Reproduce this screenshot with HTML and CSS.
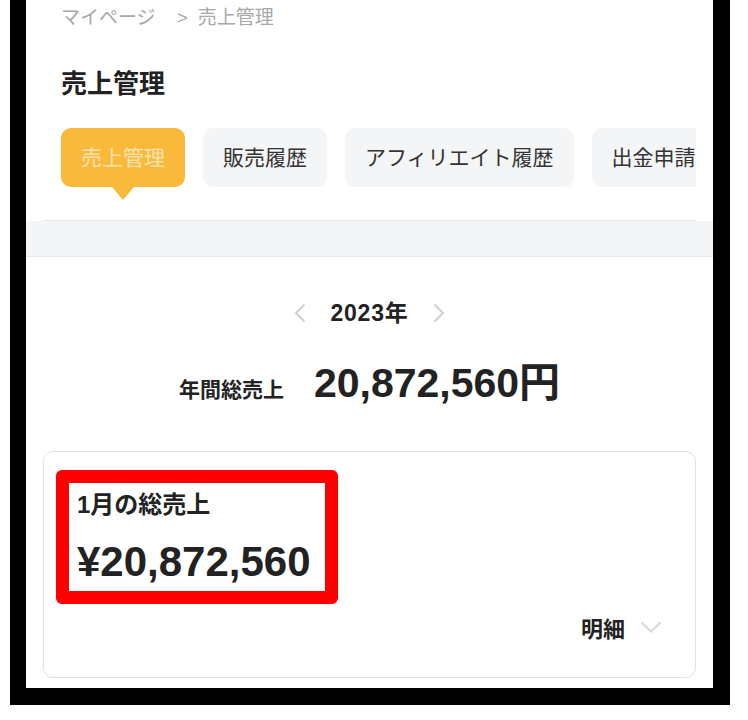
FILE: index.html
```html
<!DOCTYPE html>
<html lang="ja">
<head>
<meta charset="utf-8">
<title>売上管理</title>
<link rel="stylesheet" href="styles.css">
</head>
<body>
<div class="frame">
  <div class="screen">
    <header class="head">
      <nav class="crumb"><span>マイページ</span><span class="sep">&gt;</span><span>売上管理</span></nav>
      <h1 class="title">売上管理</h1>
      <div class="tabs">
        <div class="tab active">売上管理</div>
        <div class="tab">販売履歴</div>
        <div class="tab">アフィリエイト履歴</div>
        <div class="tab">出金申請</div>
      </div>
    </header>
    <div class="band"></div>
    <section class="summary">
      <div class="year">
        <svg class="chev" width="12" height="20" viewBox="0 0 12 20"><path d="M10.5 1.5 L2 10 L10.5 18.5" fill="none" stroke="#d0d0d0" stroke-width="2"/></svg>
        <span class="year-text">2023年</span>
        <svg class="chev" width="12" height="20" viewBox="0 0 12 20"><path d="M1.5 1.5 L10 10 L1.5 18.5" fill="none" stroke="#d0d0d0" stroke-width="2"/></svg>
      </div>
      <div class="total">
        <span class="total-label">年間総売上</span>
        <span class="total-value">20,872,560円</span>
      </div>
      <div class="card">
        <div class="mark">
          <div class="month-label">1月の総売上</div>
          <div class="month-amount">¥20,872,560</div>
        </div>
        <div class="detail">
          <span>明細</span>
          <svg width="22" height="12" viewBox="0 0 22 12"><path d="M1.5 1.5 L11 10.5 L20.5 1.5" fill="none" stroke="#d8d8d8" stroke-width="2"/></svg>
        </div>
      </div>
    </section>
  </div>
</div>
</body>
</html>
```
FILE: styles.css
```css
* { box-sizing: border-box; }
body {
  margin: 0;
  background: #fff;
  font-family: "Liberation Sans", "Noto Sans CJK JP", sans-serif;
  color: #222;
}
.frame {
  margin-left: 10px;
  width: 720px;
  border-left: 16px solid #000;
  border-right: 17px solid #000;
  border-bottom: 17px solid #000;
}
.screen {
  height: 688px;
  overflow: hidden;
  background: #fff;
}
.head {
  margin: 0 17px;
  padding-left: 18px;
  border-bottom: 1px solid #e6e7e9;
}
.crumb {
  height: 36px;
  line-height: 36px;
  font-size: 19px;
  color: #a8a8a8;
  white-space: nowrap;
}
.crumb .sep {
  margin: 0 10px 0 21px;
}
.title {
  margin: 30px 0 0;
  font-size: 26px;
  line-height: 36px;
  font-weight: 700;
  color: #222;
}
.tabs {
  display: flex;
  gap: 18px;
  margin-top: 26px;
  padding-bottom: 33px;
  overflow: hidden;
}
.tab {
  flex-shrink: 0;
  height: 59px;
  line-height: 59px;
  padding: 0 20px;
  border-radius: 10px;
  background: #f4f5f7;
  font-size: 21px;
  color: #333;
  white-space: nowrap;
}
.tab.active {
  position: relative;
  background: #f9b93b;
  color: rgba(255, 255, 255, 0.62);
}
.tab.active::after {
  content: "";
  position: absolute;
  left: 50%;
  top: 100%;
  margin-left: -11px;
  border-left: 11px solid transparent;
  border-right: 11px solid transparent;
  border-top: 13px solid #f9b93b;
}
.band {
  height: 36px;
  background: #f4f5f7;
  border-bottom: 1px solid #e6e7e9;
}
.summary {
  padding-top: 41px;
}
.year {
  display: flex;
  justify-content: center;
  align-items: center;
  gap: 24px;
  height: 30px;
}
.chev { display: block; }
.year-text {
  font-size: 23px;
  font-weight: 700;
  line-height: 30px;
  letter-spacing: 0.8px;
}
.total {
  display: flex;
  justify-content: center;
  align-items: baseline;
  gap: 30px;
  margin-top: 30px;
  height: 50px;
}
.total-label {
  font-size: 21px;
  font-weight: 700;
  line-height: 50px;
}
.total-value {
  font-size: 41px;
  font-weight: 700;
  line-height: 50px;
}
.card {
  margin: 43px 17px 0;
  border: 1px solid #e0e0e0;
  border-radius: 10px;
  padding: 18px 33px 34px 12px;
}
.mark {
  width: fit-content;
  border: 13px solid #ff0000;
  border-radius: 6px;
  padding: 6px 14px 3px 8px;
}
.month-label {
  font-size: 24px;
  font-weight: 700;
  line-height: 32px;
}
.month-amount {
  margin-top: 15px;
  font-size: 42px;
  font-weight: 700;
  line-height: 52px;
  white-space: nowrap;
}
.detail {
  display: flex;
  justify-content: flex-end;
  align-items: center;
  gap: 15px;
  margin-top: 7px;
  height: 32px;
  font-size: 22px;
  font-weight: 700;
}
.detail svg { display: block; }
```
